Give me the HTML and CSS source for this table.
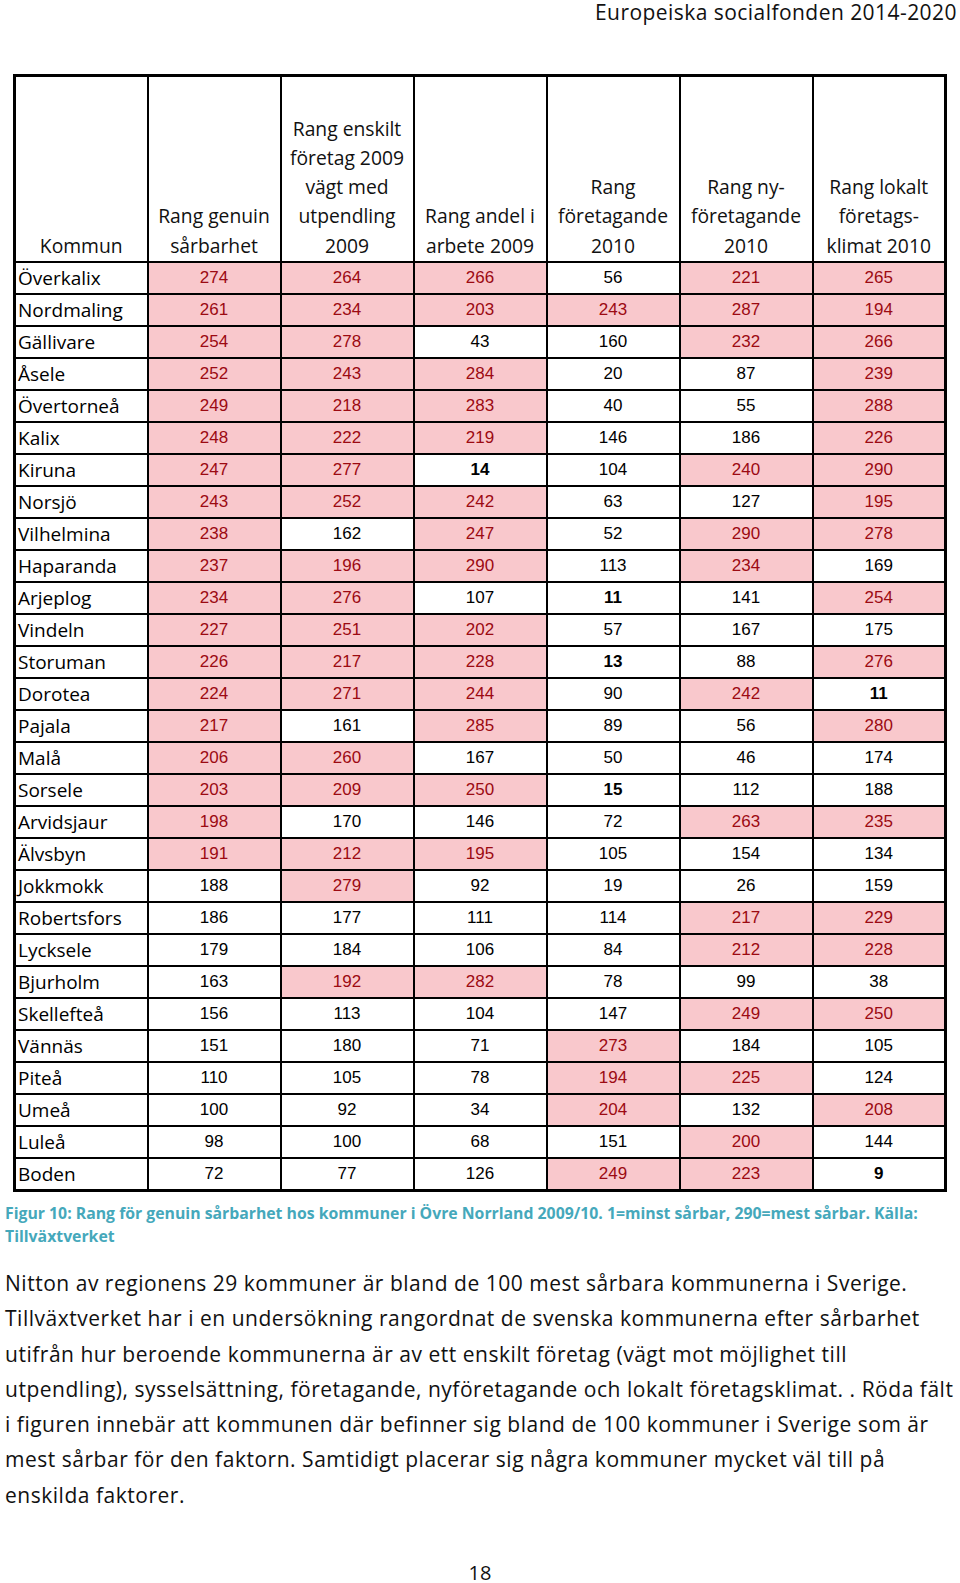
FILE: index.html
```html
<!DOCTYPE html>
<html lang="sv">
<head>
<meta charset="utf-8">
<title>Europeiska socialfonden 2014-2020</title>
<link rel="stylesheet" href="styles.css">
</head>
<body>
<div class="page">
  <header class="running-head">Europeiska socialfonden 2014-2020</header>

  <table class="rank">
    <colgroup>
      <col class="c"><col class="c"><col class="c"><col class="c"><col class="c"><col class="c"><col class="c">
    </colgroup>
    <thead>
      <tr>
        <th>Kommun</th>
        <th>Rang genuin<br>sårbarhet</th>
        <th>Rang enskilt<br>företag 2009<br>vägt med<br>utpendling<br>2009</th>
        <th>Rang andel i<br>arbete 2009</th>
        <th>Rang<br>företagande<br>2010</th>
        <th>Rang ny-<br>företagande<br>2010</th>
        <th>Rang lokalt<br>företags-<br>klimat 2010</th>
      </tr>
    </thead>
    <tbody>
      <tr><td>Överkalix</td><td class="r">274</td><td class="r">264</td><td class="r">266</td><td>56</td><td class="r">221</td><td class="r">265</td></tr>
      <tr><td>Nordmaling</td><td class="r">261</td><td class="r">234</td><td class="r">203</td><td class="r">243</td><td class="r">287</td><td class="r">194</td></tr>
      <tr><td>Gällivare</td><td class="r">254</td><td class="r">278</td><td>43</td><td>160</td><td class="r">232</td><td class="r">266</td></tr>
      <tr><td>Åsele</td><td class="r">252</td><td class="r">243</td><td class="r">284</td><td>20</td><td>87</td><td class="r">239</td></tr>
      <tr><td>Övertorneå</td><td class="r">249</td><td class="r">218</td><td class="r">283</td><td>40</td><td>55</td><td class="r">288</td></tr>
      <tr><td>Kalix</td><td class="r">248</td><td class="r">222</td><td class="r">219</td><td>146</td><td>186</td><td class="r">226</td></tr>
      <tr><td>Kiruna</td><td class="r">247</td><td class="r">277</td><td class="b">14</td><td>104</td><td class="r">240</td><td class="r">290</td></tr>
      <tr><td>Norsjö</td><td class="r">243</td><td class="r">252</td><td class="r">242</td><td>63</td><td>127</td><td class="r">195</td></tr>
      <tr><td>Vilhelmina</td><td class="r">238</td><td>162</td><td class="r">247</td><td>52</td><td class="r">290</td><td class="r">278</td></tr>
      <tr><td>Haparanda</td><td class="r">237</td><td class="r">196</td><td class="r">290</td><td>113</td><td class="r">234</td><td>169</td></tr>
      <tr><td>Arjeplog</td><td class="r">234</td><td class="r">276</td><td>107</td><td class="b">11</td><td>141</td><td class="r">254</td></tr>
      <tr><td>Vindeln</td><td class="r">227</td><td class="r">251</td><td class="r">202</td><td>57</td><td>167</td><td>175</td></tr>
      <tr><td>Storuman</td><td class="r">226</td><td class="r">217</td><td class="r">228</td><td class="b">13</td><td>88</td><td class="r">276</td></tr>
      <tr><td>Dorotea</td><td class="r">224</td><td class="r">271</td><td class="r">244</td><td>90</td><td class="r">242</td><td class="b">11</td></tr>
      <tr><td>Pajala</td><td class="r">217</td><td>161</td><td class="r">285</td><td>89</td><td>56</td><td class="r">280</td></tr>
      <tr><td>Malå</td><td class="r">206</td><td class="r">260</td><td>167</td><td>50</td><td>46</td><td>174</td></tr>
      <tr><td>Sorsele</td><td class="r">203</td><td class="r">209</td><td class="r">250</td><td class="b">15</td><td>112</td><td>188</td></tr>
      <tr><td>Arvidsjaur</td><td class="r">198</td><td>170</td><td>146</td><td>72</td><td class="r">263</td><td class="r">235</td></tr>
      <tr><td>Älvsbyn</td><td class="r">191</td><td class="r">212</td><td class="r">195</td><td>105</td><td>154</td><td>134</td></tr>
      <tr><td>Jokkmokk</td><td>188</td><td class="r">279</td><td>92</td><td>19</td><td>26</td><td>159</td></tr>
      <tr><td>Robertsfors</td><td>186</td><td>177</td><td>111</td><td>114</td><td class="r">217</td><td class="r">229</td></tr>
      <tr><td>Lycksele</td><td>179</td><td>184</td><td>106</td><td>84</td><td class="r">212</td><td class="r">228</td></tr>
      <tr><td>Bjurholm</td><td>163</td><td class="r">192</td><td class="r">282</td><td>78</td><td>99</td><td>38</td></tr>
      <tr><td>Skellefteå</td><td>156</td><td>113</td><td>104</td><td>147</td><td class="r">249</td><td class="r">250</td></tr>
      <tr><td>Vännäs</td><td>151</td><td>180</td><td>71</td><td class="r">273</td><td>184</td><td>105</td></tr>
      <tr><td>Piteå</td><td>110</td><td>105</td><td>78</td><td class="r">194</td><td class="r">225</td><td>124</td></tr>
      <tr><td>Umeå</td><td>100</td><td>92</td><td>34</td><td class="r">204</td><td>132</td><td class="r">208</td></tr>
      <tr><td>Luleå</td><td>98</td><td>100</td><td>68</td><td>151</td><td class="r">200</td><td>144</td></tr>
      <tr><td>Boden</td><td>72</td><td>77</td><td>126</td><td class="r">249</td><td class="r">223</td><td class="b">9</td></tr>
    </tbody>
  </table>

  <p class="caption">Figur 10: Rang för genuin sårbarhet hos kommuner i Övre Norrland 2009/10. 1=minst sårbar, 290=mest sårbar. Källa:<br>Tillväxtverket</p>

  <p class="body-text">Nitton av regionens 29 kommuner är bland de 100 mest sårbara kommunerna i Sverige.<br>Tillväxtverket har i en undersökning rangordnat de svenska kommunerna efter sårbarhet<br>utifrån hur beroende kommunerna är av ett enskilt företag (vägt mot möjlighet till<br>utpendling), sysselsättning, företagande, nyföretagande och lokalt företagsklimat. . Röda fält<br>i figuren innebär att kommunen där befinner sig bland de 100 kommuner i Sverige som är<br>mest sårbar för den faktorn. Samtidigt placerar sig några kommuner mycket väl till på<br>enskilda faktorer.</p>

  <footer class="page-number">18</footer>
</div>
</body>
</html>
```

FILE: styles.css
```css
html, body {
  margin: 0;
  padding: 0;
  background: #ffffff;
}

.page {
  width: 960px;
  height: 1583px;
  position: relative;
  font-family: "Open Sans", "Liberation Sans", sans-serif;
  color: #111;
}

.running-head {
  text-align: right;
  font-size: 21px;
  letter-spacing: 0.45px;
  line-height: 24px;
  padding: 0 3px 0 0;
  height: 24px;
  color: #111;
}

.rank {
  border-collapse: collapse;
  table-layout: fixed;
  width: 933px;
  margin: 50px 0 0 13px;
  border: 3px solid #000;
}

.rank col.c {
  width: 133px;
}

.rank th,
.rank td {
  border: 2px solid #000;
  padding: 0;
}

.rank th {
  height: 183px;
  vertical-align: bottom;
  text-align: center;
  font-weight: normal;
  font-size: 19.3px;
  line-height: 29.3px;
  padding-bottom: 1px;
}

.rank td {
  height: 30px;
  text-align: center;
  vertical-align: middle;
  font-family: "Liberation Sans", Arial, sans-serif;
  font-size: 17px;
  color: #000;
}

.rank td:first-child {
  text-align: left;
  padding-left: 2px;
  font-family: "Open Sans", sans-serif;
  font-size: 19px;
}

.rank td.r {
  background: #f9c8cc;
  color: #9c0a12;
}

.rank td.b {
  font-weight: bold;
}

.caption {
  margin: 10px 0 0 5px;
  font-size: 15.8px;
  line-height: 23px;
  font-weight: bold;
  color: #45a8bb;
}

.body-text {
  margin: 18px 0 0 5px;
  font-size: 21px;
  letter-spacing: 0.52px;
  line-height: 35.3px;
  white-space: nowrap;
  color: #111;
}

.page-number {
  position: absolute;
  left: 0;
  right: 0;
  top: 1560px;
  text-align: center;
  font-size: 20px;
  line-height: 26px;
}
```
